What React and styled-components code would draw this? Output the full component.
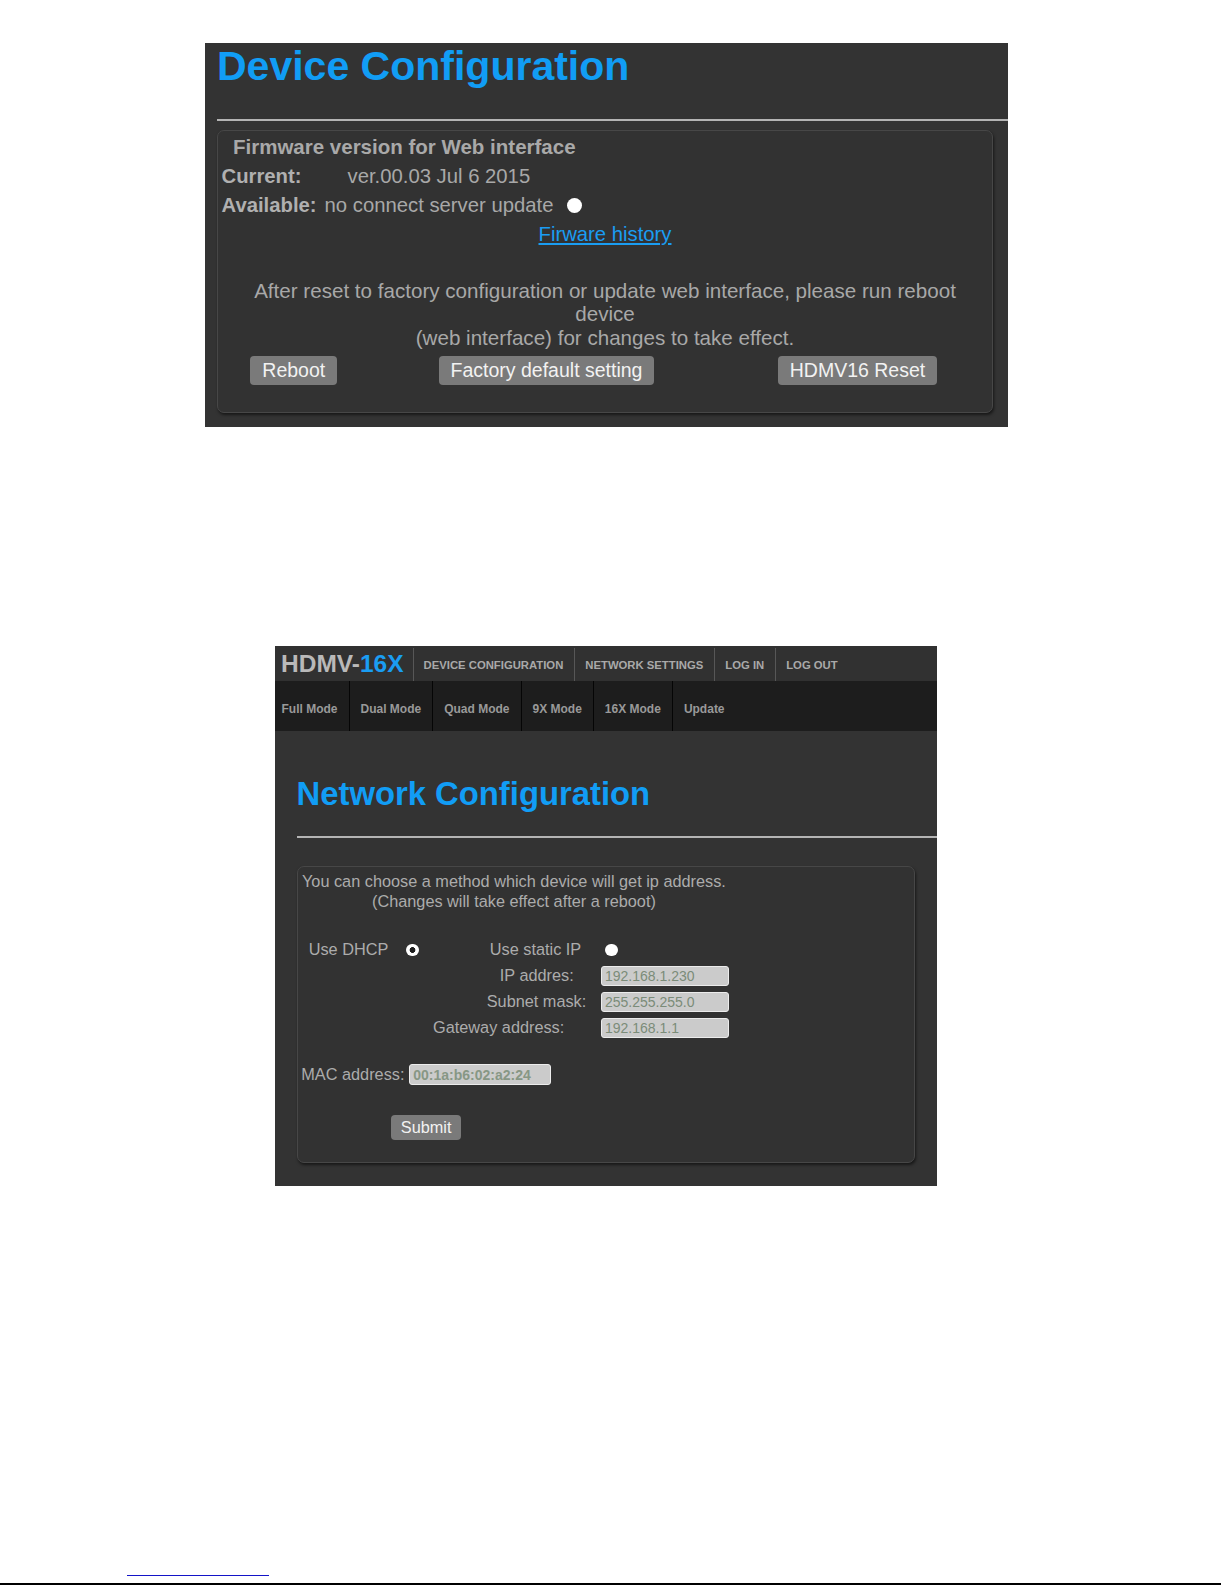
import React from "react";
import styled, { createGlobalStyle } from "styled-components";

const GlobalStyle = createGlobalStyle`
  html, body {
    margin: 0;
    padding: 0;
    background: #ffffff;
  }
  body {
    font-family: "Liberation Sans", Arial, sans-serif;
  }
`;

const Page = styled.div`
  display: flow-root;
  width: 1225px;
  height: 1585px;
  overflow: hidden;
  background: #ffffff;
`;

const Shot = styled.section`
  box-sizing: border-box;
  margin: ${(p) => p.$top}px 0 0 ${(p) => p.$left}px;
  width: ${(p) => p.$width}px;
  height: ${(p) => p.$height}px;
  background: #333333;
  overflow: hidden;
  display: flow-root;
`;

const Content = styled.div`
  padding-left: ${(p) => p.$pad}px;
  display: flow-root;
`;

const Heading = styled.h1`
  margin: ${(p) => p.$mt}px 0 0 0;
  font-size: ${(p) => p.$size}px;
  line-height: ${(p) => p.$lh}px;
  font-weight: 700;
  color: #119df5;
  letter-spacing: 0;
`;

const Rule = styled.div`
  margin-top: ${(p) => p.$mt}px;
  height: 2px;
  background: #b4b4b4;
`;

const Fieldset = styled.div`
  box-sizing: border-box;
  margin: ${(p) => p.$mt}px 0 0 ${(p) => p.$ml}px;
  width: ${(p) => p.$width}px;
  padding: ${(p) => p.$pt}px 0 ${(p) => p.$pb}px 0;
  border: 1px solid #474747;
  border-radius: 7px;
  box-shadow: 1px 2px 3px rgba(0, 0, 0, 0.55);
  background: #323232;
  color: #ababab;
`;

/* ---------- device configuration ---------- */

const Legend = styled.div`
  padding-left: 15px;
  font-size: 20.5px;
  line-height: 30px;
  font-weight: 700;
  color: #a9a9a9;
`;

const InfoRow = styled.div`
  display: flex;
  align-items: center;
  height: 29.3px;
  padding-left: 3.5px;
  font-size: 20.3px;
`;

const InfoLabel = styled.span`
  font-weight: 700;
  color: #b0b0b0;
`;

const InfoValue = styled.span`
  margin-left: ${(p) => p.$gap}px;
  color: #a8a8a8;
`;

const Dot = styled.span`
  display: inline-block;
  box-sizing: border-box;
  width: ${(p) => p.$size}px;
  height: ${(p) => p.$size}px;
  margin-left: ${(p) => p.$gap}px;
  border-radius: 50%;
  background: ${(p) =>
    p.$checked
      ? "radial-gradient(circle, #1e1e1e 0 2.6px, #ffffff 3.2px)"
      : "#ffffff"};
  flex-shrink: 0;
`;

const LinkRow = styled.div`
  text-align: center;
  font-size: 20.3px;
  line-height: 28.6px;
`;

const HistoryLink = styled.a`
  color: #1a9df2;
  text-decoration: underline;
  cursor: pointer;
`;

const Notice = styled.p`
  margin: 30.3px 0 0 0;
  padding: 0 16px;
  text-align: center;
  font-size: 20.6px;
  line-height: 23.3px;
  color: #a8a8a8;
`;

const ButtonRow = styled.div`
  display: flex;
  align-items: center;
  margin-top: ${(p) => p.$mt}px;
  padding-left: ${(p) => p.$pl}px;
`;

const GrayButton = styled.button`
  box-sizing: border-box;
  margin: 0 0 0 ${(p) => p.$gap || 0}px;
  height: ${(p) => p.$h}px;
  padding: 0 ${(p) => p.$px}px;
  border: 0;
  border-radius: 4px;
  background: #7a7a7a;
  color: #f2f2f2;
  font-family: "Liberation Sans", Arial, sans-serif;
  font-size: ${(p) => p.$size}px;
  line-height: 1;
  white-space: nowrap;
  cursor: pointer;
`;

/* ---------- navigation ---------- */

const TopBar = styled.nav`
  display: flex;
  align-items: stretch;
  height: 34.4px;
  background: #313131;
`;

const Logo = styled.div`
  display: flex;
  align-items: center;
  padding: 1px 9px 0 6px;
  font-size: 24.5px;
  font-weight: 700;
  color: #b9b9b9;
  white-space: nowrap;
`;

const LogoAccent = styled.span`
  color: #1a9df2;
`;

const TopItem = styled.a`
  display: flex;
  align-items: center;
  padding: 1px 11px 0 10px;
  border-left: 1px solid #575757;
  margin: 2px 0 0 0;
  font-size: 11.3px;
  font-weight: 700;
  color: #a9a9a9;
  white-space: nowrap;
  cursor: pointer;
`;

const SubBar = styled.nav`
  display: flex;
  align-items: stretch;
  height: 50.3px;
  background: #1d1d1d;
`;

const SubItem = styled.a`
  display: flex;
  align-items: center;
  padding: 6px 11px 0 ${(p) => (p.$first ? 6.5 : 11)}px;
  border-left: ${(p) => (p.$first ? "0" : "1px solid #050505")};
  font-size: 12px;
  font-weight: 700;
  color: #999999;
  white-space: nowrap;
  cursor: pointer;
`;

/* ---------- network configuration ---------- */

const Intro = styled.div`
  padding-left: 4px;
  font-size: 16.3px;
  line-height: 20px;
  color: #acacac;
`;

const IntroIndent = styled.div`
  padding-left: 70px;
`;

const OptionRow = styled.div`
  display: flex;
  align-items: center;
  height: 26px;
  margin-top: 25.5px;
  padding-left: 10.7px;
  font-size: 16.3px;
  color: #acacac;
`;

const OptionLabel = styled.span`
  margin-left: ${(p) => p.$gap || 0}px;
  white-space: nowrap;
`;

const FieldRow = styled.div`
  display: flex;
  align-items: center;
  height: 26px;
  margin-top: ${(p) => p.$mt || 0}px;
  padding-left: ${(p) => p.$pl || 0}px;
  font-size: 16.3px;
  color: #acacac;
`;

const FieldLabel = styled.label`
  box-sizing: border-box;
  width: ${(p) => p.$width}px;
  padding-right: ${(p) => p.$pr}px;
  text-align: right;
  white-space: nowrap;
`;

const TextField = styled.input`
  box-sizing: border-box;
  width: ${(p) => p.$width}px;
  height: ${(p) => p.$h}px;
  margin: 0 0 0 ${(p) => p.$gap || 0}px;
  padding: 0 3px;
  border: 1px solid #ececec;
  border-radius: 3px;
  background: #cbcbcb;
  color: ${(p) => (p.$bold ? "#879785" : "#7b8c79")};
  font-family: "Liberation Sans", Arial, sans-serif;
  font-size: 14px;
  font-weight: ${(p) => (p.$bold ? 700 : 400)};
  outline: none;
`;

/* ---------- page footer marks ---------- */

const FootRule = styled.div`
  margin: ${(p) => p.$mt}px 0 0 ${(p) => p.$ml}px;
  width: ${(p) => p.$width}px;
  height: ${(p) => p.$h}px;
  background: ${(p) => p.$color};
`;

const topLinks = ["DEVICE CONFIGURATION", "NETWORK SETTINGS", "LOG IN", "LOG OUT"];
const modes = ["Full Mode", "Dual Mode", "Quad Mode", "9X Mode", "16X Mode", "Update"];

const netFields = [
  { label: "IP addres:", value: "192.168.1.230", pr: 27.3 },
  { label: "Subnet mask:", value: "255.255.255.0", pr: 14.7 },
  { label: "Gateway address:", value: "192.168.1.1", pr: 36.7 },
];

const DeviceConfiguration = () => (
  <Shot $top={43} $left={205} $width={803} $height={384}>
    <Content $pad={12}>
      <Heading $mt={0} $size={41} $lh={47}>
        Device Configuration
      </Heading>
      <Rule $mt={28.5} />
      <Fieldset $mt={9.5} $ml={0} $width={776} $pt={0.5} $pb={26.4}>
        <Legend>Firmware version for Web interface</Legend>
        <InfoRow>
          <InfoLabel>Current:</InfoLabel>
          <InfoValue $gap={46}>ver.00.03 Jul 6 2015</InfoValue>
        </InfoRow>
        <InfoRow>
          <InfoLabel>Available:</InfoLabel>
          <InfoValue $gap={8}>no connect server update</InfoValue>
          <Dot $size={15} $gap={14} />
        </InfoRow>
        <LinkRow>
          <HistoryLink>Firware history</HistoryLink>
        </LinkRow>
        <Notice>
          After reset to factory configuration or update web interface, please run reboot device
          <br />
          (web interface) for changes to take effect.
        </Notice>
        <ButtonRow $mt={7.3} $pl={32.3}>
          <GrayButton $h={29.3} $px={12} $size={19.5}>
            Reboot
          </GrayButton>
          <GrayButton $gap={101.4} $h={29.3} $px={12} $size={19.5}>
            Factory default setting
          </GrayButton>
          <GrayButton $gap={123.3} $h={29.3} $px={12} $size={19.5}>
            HDMV16 Reset
          </GrayButton>
        </ButtonRow>
      </Fieldset>
    </Content>
  </Shot>
);

const NetworkConfiguration = () => (
  <Shot $top={219.3} $left={275} $width={661.5} $height={539.7}>
    <TopBar>
      <Logo>
        HDMV-<LogoAccent>16X</LogoAccent>
      </Logo>
      {topLinks.map((t) => (
        <TopItem key={t}>{t}</TopItem>
      ))}
    </TopBar>
    <SubBar>
      {modes.map((m, i) => (
        <SubItem key={m} $first={i === 0}>
          {m}
        </SubItem>
      ))}
    </SubBar>
    <Content $pad={21.6}>
      <Heading $mt={44} $size={32.8} $lh={37.4}>
        Network Configuration
      </Heading>
      <Rule $mt={23.6} />
      <Fieldset $mt={28.5} $ml={0.4} $width={618} $pt={4} $pb={22.3}>
        <Intro>
          You can choose a method which device will get ip address.
          <IntroIndent>(Changes will take effect after a reboot)</IntroIndent>
        </Intro>
        <OptionRow>
          <OptionLabel>Use DHCP</OptionLabel>
          <Dot $size={12.5} $gap={18} $checked />
          <OptionLabel $gap={71}>Use static IP</OptionLabel>
          <Dot $size={12.5} $gap={24} />
        </OptionRow>
        {netFields.map((f) => (
          <FieldRow key={f.label}>
            <FieldLabel $width={303} $pr={f.pr}>
              {f.label}
            </FieldLabel>
            <TextField $width={128} $h={20} readOnly value={f.value} />
          </FieldRow>
        ))}
        <FieldRow $mt={21} $pl={3.3}>
          <FieldLabel $width={102.4} $pr={0}>
            MAC address:
          </FieldLabel>
          <TextField $width={141.4} $h={21} $gap={5.6} $bold readOnly value="00:1a:b6:02:a2:24" />
        </FieldRow>
        <ButtonRow $mt={27} $pl={93.3}>
          <GrayButton $h={25} $px={9.5} $size={16.3}>
            Submit
          </GrayButton>
        </ButtonRow>
      </Fieldset>
    </Content>
  </Shot>
);

export default function App() {
  return (
    <Page>
      <GlobalStyle />
      <DeviceConfiguration />
      <NetworkConfiguration />
      <FootRule $mt={389} $ml={127} $width={142} $h={1} $color="#1414c8" />
      <FootRule $mt={7} $ml={0} $width={1221} $h={2} $color="#000000" />
    </Page>
  );
}
